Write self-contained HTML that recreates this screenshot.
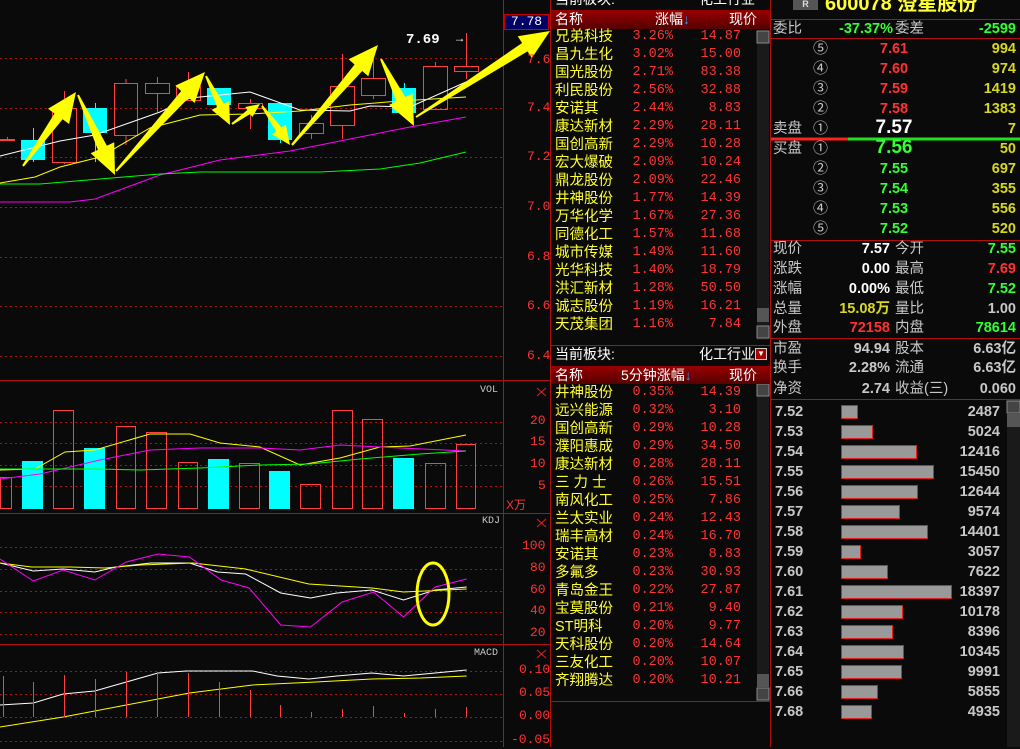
<!DOCTYPE html>
<html><head><meta charset="utf-8">
<style>
*{margin:0;padding:0;box-sizing:border-box}
body{width:1020px;height:747px;background:#0a0a0a;overflow:hidden;position:relative;font-family:"Liberation Sans","Noto Sans CJK SC",sans-serif;}
.a{position:absolute;white-space:nowrap;line-height:18px}
.cn{font-family:"Liberation Sans","Noto Sans CJK SC",sans-serif;font-size:14px}
.m{font-family:"Liberation Mono","Noto Sans CJK SC",monospace;font-size:13px}
.y{color:#ffff33}.r{color:#ff3232}.g{color:#33ff33}.w{color:#fff}.gr{color:#c8c8c8}.yy{color:#d8d820}
.row{position:absolute;left:0;width:206px;height:18px;line-height:18px;font-size:14.5px}
.row .n{position:absolute;left:4px;color:#ffff33}
.row .p{position:absolute;right:84px;color:#ff3232;font-family:"Liberation Mono",monospace;font-size:13.5px}
.row .v{position:absolute;right:16px;color:#ff3232;font-family:"Liberation Mono",monospace;font-size:13.5px}
.rp .a{font-size:14.5px}
.b{font-weight:bold}
</style></head><body>
<svg id="ch" width="1020" height="747" style="position:absolute;left:0;top:0"></svg>

<div class="a m r" style="left:527px;top:51px">7.6</div>
<div class="a m r" style="left:527px;top:99px">7.4</div>
<div class="a m r" style="left:527px;top:148px">7.2</div>
<div class="a m r" style="left:527px;top:198px">7.0</div>
<div class="a m r" style="left:527px;top:248px">6.8</div>
<div class="a m r" style="left:527px;top:297px">6.6</div>
<div class="a m r" style="left:527px;top:347px">6.4</div>
<div class="a m" style="left:504px;top:14px;width:45px;height:16px;line-height:14px;background:#000066;border:1px solid #c00;color:#fff;text-align:center">7.78</div>
<div class="a m w" style="left:406px;top:31px;font-size:14px;font-weight:bold">7.69</div>
<div class="a m w" style="left:456px;top:30px;font-size:12px">→</div>
<div class="a m gr" style="left:480px;top:382px;font-size:10px">VOL</div>
<div class="a m gr" style="left:482px;top:513px;font-size:10px">KDJ</div>
<div class="a m gr" style="left:474px;top:645px;font-size:10px">MACD</div>
<div class="a m r" style="left:530px;top:412px">20</div>
<div class="a m r" style="left:530px;top:433px">15</div>
<div class="a m r" style="left:530px;top:455px">10</div>
<div class="a m r" style="left:538px;top:477px">5</div>
<div class="a cn r" style="left:506px;top:496px;font-size:12px">X万</div>
<div class="a m r" style="left:522px;top:537px">100</div>
<div class="a m r" style="left:530px;top:559px">80</div>
<div class="a m r" style="left:530px;top:581px">60</div>
<div class="a m r" style="left:530px;top:602px">40</div>
<div class="a m r" style="left:530px;top:624px">20</div>
<div class="a m r" style="left:519px;top:661px">0.10</div>
<div class="a m r" style="left:519px;top:684px">0.05</div>
<div class="a m r" style="left:519px;top:707px">0.00</div>
<div class="a m r" style="left:511px;top:731px">-0.05</div>

<div style="position:absolute;left:551px;top:0;width:219px;height:747px">
<div class="a cn w" style="left:4px;top:-10px">当前板块:</div>
<div class="a cn w" style="left:148px;top:-10px">化工行业</div>
<div style="position:absolute;left:0;top:10px;width:219px;height:19px;background:linear-gradient(#900,#500)"></div>
<div class="a cn w" style="left:4px;top:10px">名称</div>
<div class="a cn w" style="left:104px;top:10px">涨幅<span style="color:#39f">↓</span></div>
<div class="a cn w" style="left:178px;top:10px">现价</div>
<div style="position:absolute;left:0;top:28px">
<div class="row" style="top:0"><span class="n">兄弟科技</span><span class="p">3.26%</span><span class="v">14.87</span></div>
<div class="row" style="top:18px"><span class="n">昌九生化</span><span class="p">3.02%</span><span class="v">15.00</span></div>
<div class="row" style="top:36px"><span class="n">国光股份</span><span class="p">2.71%</span><span class="v">83.38</span></div>
<div class="row" style="top:54px"><span class="n">利民股份</span><span class="p">2.56%</span><span class="v">32.88</span></div>
<div class="row" style="top:72px"><span class="n">安诺其</span><span class="p">2.44%</span><span class="v">8.83</span></div>
<div class="row" style="top:90px"><span class="n">康达新材</span><span class="p">2.29%</span><span class="v">28.11</span></div>
<div class="row" style="top:108px"><span class="n">国创高新</span><span class="p">2.29%</span><span class="v">10.28</span></div>
<div class="row" style="top:126px"><span class="n">宏大爆破</span><span class="p">2.09%</span><span class="v">10.24</span></div>
<div class="row" style="top:144px"><span class="n">鼎龙股份</span><span class="p">2.09%</span><span class="v">22.46</span></div>
<div class="row" style="top:162px"><span class="n">井神股份</span><span class="p">1.77%</span><span class="v">14.39</span></div>
<div class="row" style="top:180px"><span class="n">万华化学</span><span class="p">1.67%</span><span class="v">27.36</span></div>
<div class="row" style="top:198px"><span class="n">同德化工</span><span class="p">1.57%</span><span class="v">11.68</span></div>
<div class="row" style="top:216px"><span class="n">城市传媒</span><span class="p">1.49%</span><span class="v">11.60</span></div>
<div class="row" style="top:234px"><span class="n">光华科技</span><span class="p">1.40%</span><span class="v">18.79</span></div>
<div class="row" style="top:252px"><span class="n">洪汇新材</span><span class="p">1.28%</span><span class="v">50.50</span></div>
<div class="row" style="top:270px"><span class="n">诚志股份</span><span class="p">1.19%</span><span class="v">16.21</span></div>
<div class="row" style="top:288px"><span class="n">天茂集团</span><span class="p">1.16%</span><span class="v">7.84</span></div>
</div>
<div class="a cn w" style="left:4px;top:345px">当前板块:</div>
<div class="a cn w" style="left:148px;top:345px">化工行业</div>
<div style="position:absolute;left:204px;top:348px;width:12px;height:12px;background:#a00;border:1px solid #ccc;color:#fff;font-size:8px;line-height:10px;text-align:center">▼</div>
<div style="position:absolute;left:0;top:366px;width:219px;height:18px;background:linear-gradient(#900,#500)"></div>
<div class="a cn w" style="left:4px;top:366px">名称</div>
<div class="a cn w" style="left:70px;top:366px">5分钟涨幅<span style="color:#39f">↓</span></div>
<div class="a cn w" style="left:178px;top:366px">现价</div>
<div style="position:absolute;left:0;top:384px">
<div class="row" style="top:0"><span class="n">井神股份</span><span class="p">0.35%</span><span class="v">14.39</span></div>
<div class="row" style="top:18px"><span class="n">远兴能源</span><span class="p">0.32%</span><span class="v">3.10</span></div>
<div class="row" style="top:36px"><span class="n">国创高新</span><span class="p">0.29%</span><span class="v">10.28</span></div>
<div class="row" style="top:54px"><span class="n">濮阳惠成</span><span class="p">0.29%</span><span class="v">34.50</span></div>
<div class="row" style="top:72px"><span class="n">康达新材</span><span class="p">0.28%</span><span class="v">28.11</span></div>
<div class="row" style="top:90px"><span class="n">三 力 士</span><span class="p">0.26%</span><span class="v">15.51</span></div>
<div class="row" style="top:108px"><span class="n">南风化工</span><span class="p">0.25%</span><span class="v">7.86</span></div>
<div class="row" style="top:126px"><span class="n">兰太实业</span><span class="p">0.24%</span><span class="v">12.43</span></div>
<div class="row" style="top:144px"><span class="n">瑞丰高材</span><span class="p">0.24%</span><span class="v">16.70</span></div>
<div class="row" style="top:162px"><span class="n">安诺其</span><span class="p">0.23%</span><span class="v">8.83</span></div>
<div class="row" style="top:180px"><span class="n">多氟多</span><span class="p">0.23%</span><span class="v">30.93</span></div>
<div class="row" style="top:198px"><span class="n">青岛金王</span><span class="p">0.22%</span><span class="v">27.87</span></div>
<div class="row" style="top:216px"><span class="n">宝莫股份</span><span class="p">0.21%</span><span class="v">9.40</span></div>
<div class="row" style="top:234px"><span class="n">ST明科</span><span class="p">0.20%</span><span class="v">9.77</span></div>
<div class="row" style="top:252px"><span class="n">天科股份</span><span class="p">0.20%</span><span class="v">14.64</span></div>
<div class="row" style="top:270px"><span class="n">三友化工</span><span class="p">0.20%</span><span class="v">10.07</span></div>
<div class="row" style="top:288px"><span class="n">齐翔腾达</span><span class="p">0.20%</span><span class="v">10.21</span></div>
</div>
</div>

<div class="rp" style="position:absolute;left:771px;top:0;width:249px;height:747px">
<div style="position:absolute;left:22px;top:0;width:25px;height:10px;background:#555;color:#ddd;font-size:9px;font-weight:bold;text-align:center;line-height:8px">R</div>
<div class="a y b" style="left:54px;top:-7px;font-size:20px;line-height:22px">600078 澄星股份</div>
<div class="a gr" style="left:2px;top:20px">委比</div>
<div class="a g b" style="left:68px;top:20px">-37.37%</div>
<div class="a gr" style="left:124px;top:20px">委差</div>
<div class="a g b" style="right:4px;top:20px">-2599</div>
<div id="ob"></div>
<div class="a gr" style="left:2px;top:120px">卖盘</div>
<div class="a gr" style="left:2px;top:140px">买盘</div>
<div class="a gr" style="left:2px;top:240px">现价</div><div class="a w b" style="right:130px;top:240px">7.57</div><div class="a gr" style="left:124px;top:240px">今开</div><div class="a g b" style="right:4px;top:240px">7.55</div>
<div class="a gr" style="left:2px;top:260px">涨跌</div><div class="a w b" style="right:130px;top:260px">0.00</div><div class="a gr" style="left:124px;top:260px">最高</div><div class="a r b" style="right:4px;top:260px">7.69</div>
<div class="a gr" style="left:2px;top:280px">涨幅</div><div class="a w b" style="right:130px;top:280px">0.00%</div><div class="a gr" style="left:124px;top:280px">最低</div><div class="a g b" style="right:4px;top:280px">7.52</div>
<div class="a gr" style="left:2px;top:300px">总量</div><div class="a yy b" style="right:130px;top:300px">15.08万</div><div class="a gr" style="left:124px;top:300px">量比</div><div class="a gr b" style="right:4px;top:300px">1.00</div>
<div class="a gr" style="left:2px;top:319px">外盘</div><div class="a r b" style="right:130px;top:319px">72158</div><div class="a gr" style="left:124px;top:319px">内盘</div><div class="a g b" style="right:4px;top:319px">78614</div>
<div class="a gr" style="left:2px;top:340px">市盈</div><div class="a gr b" style="right:130px;top:340px">94.94</div><div class="a gr" style="left:124px;top:340px">股本</div><div class="a gr b" style="right:4px;top:340px">6.63亿</div>
<div class="a gr" style="left:2px;top:359px">换手</div><div class="a gr b" style="right:130px;top:359px">2.28%</div><div class="a gr" style="left:124px;top:359px">流通</div><div class="a gr b" style="right:4px;top:359px">6.63亿</div>
<div class="a gr" style="left:2px;top:380px">净资</div><div class="a gr b" style="right:130px;top:380px">2.74</div><div class="a gr" style="left:124px;top:380px">收益(三)</div><div class="a gr b" style="right:4px;top:380px">0.060</div>
<div id="lad"></div>
</div>

<script>
var S=document.getElementById('ch'),h='';
function L(x1,y1,x2,y2,c,w,d){h+='<line x1="'+x1+'" y1="'+y1+'" x2="'+x2+'" y2="'+y2+'" stroke="'+c+'" stroke-width="'+(w||1)+'"'+(d?' stroke-dasharray="'+d+'"':'')+'/>';}
function R(x,y,w,hh,f,s){h+='<rect x="'+x+'" y="'+y+'" width="'+w+'" height="'+hh+'" fill="'+f+'" stroke="'+(s||'none')+'"/>';}
function P(pts,c,w){h+='<polyline fill="none" stroke="'+c+'" stroke-width="'+(w||1)+'" points="'+pts.map(function(p){return p.join(',')}).join(' ')+'"/>';}
[58,108,157,207,257,306,356,422,443,465,486,547,569,591,612,634,671,694,717,741].forEach(function(y){L(0,y+.5,503,y+.5,'#b01010',1,'2,3');});
L(503.5,0,503.5,747,'#b01010');L(0,380.5,550,380.5,'#b01010');L(0,513.5,550,513.5,'#b01010');L(0,644.5,550,644.5,'#b01010');
L(550.5,0,550.5,747,'#b01010');L(770.5,0,770.5,747,'#b01010');
L(551,345.5,770,345.5,'#b01010');L(551,701.5,770,701.5,'#b01010');
L(771,19.5,1020,19.5,'#b01010');L(771,38.5,1020,38.5,'#b01010');L(771,240.5,1020,240.5,'#b01010');L(771,338.5,1020,338.5,'#b01010');L(771,399.5,1020,399.5,'#b01010');
L(771,139,848,139,'#ff2020',3);L(848,139,1020,139,'#20e020',3);
[388,519,650].forEach(function(y){L(537,y,546,y+8,'#e02020');L(546,y,537,y+8,'#e02020');});
R(757,31,12,309,'#1a1a1a');R(757,31,12,12,'#444','#888');R(757,326,12,12,'#444','#888');R(757,308,12,14,'#555');
R(757,384,12,317,'#1a1a1a');R(757,384,12,12,'#444','#888');R(757,688,12,12,'#444','#888');R(757,674,12,13,'#555');
R(1007,400,13,347,'#1a1a1a');R(1007,401,13,12,'#444','#888');R(1007,414,13,13,'#555');
var C=[[0,14,139,139,137,141,1],[21,45,140,160,128,162,0],[52,76,108,162,91,164,1],[83,107,108,133,103,162,0],[114,137,83,135,79,145,1],[145,169,83,93,77,112,1],[176,200,86,100,72,101,1],[207,231,88,105,88,105,0],[238,262,103,108,99,129,1],[268,292,103,140,103,143,0],[299,323,123,133,115,139,1],[330,354,86,125,54,139,1],[361,385,78,95,59,99,1],[392,416,88,113,83,114,0],[423,447,66,109,62,109,1],[454,478,66,71,33,79,1]];
C.forEach(function(c){var cx=(c[0]+c[1])/2+.5;if(c[6]){L(cx,c[4],cx,c[2],'#ff4040');L(cx,c[3],cx,c[5],'#ff4040');R(c[0]+.5,c[2]+.5,c[1]-c[0],Math.max(c[3]-c[2],1),'none','#ff4040');}else{L(cx,c[4],cx,c[5],'#00ffff');R(c[0],c[2],c[1]-c[0],c[3]-c[2],'#00ffff');}});
P([[0,156],[60,141],[95,135],[160,112],[190,98],[250,92],[300,110],[350,111],[370,106],[410,107],[466,82]],'#fff');
P([[0,183],[35,177],[60,167],[100,157],[150,128],[200,115],[250,114],[300,111],[350,105],[400,101],[466,97]],'#ffff00');
P([[0,202],[70,202],[95,199],[160,175],[220,160],[290,151],[350,139],[410,127],[466,117]],'#ff00ff');
P([[0,184],[40,184],[100,179],[160,174],[200,172],[260,172],[320,172],[380,169],[420,163],[466,152]],'#00ff00');
function A(x1,y1,x2,y2){var dx=x2-x1,dy=y2-y1,l=Math.sqrt(dx*dx+dy*dy),ux=dx/l,uy=dy/l,nx=-uy,ny=ux,hl=Math.min(30,l*.4),hw=Math.min(13,l*.18),sw=Math.min(5,l*.07);
var bx=x2-ux*hl,by=y2-uy*hl;var pts=[[x1+nx*1,y1+ny*1],[bx+nx*sw,by+ny*sw],[bx+nx*hw,by+ny*hw],[x2,y2],[bx-nx*hw,by-ny*hw],[bx-nx*sw,by-ny*sw],[x1-nx*1,y1-ny*1]];
h+='<polygon fill="#ffff00" points="'+pts.map(function(p){return p[0].toFixed(1)+','+p[1].toFixed(1)}).join(' ')+'"/>';}
A(23,166,76,92);A(78,95,115,175);A(116,171,205,72);A(206,76,230,125);A(232,124,260,104);A(262,106,290,145);A(292,145,378,45);A(381,59,414,126);A(416,117,550,31);
var V=[[0,11,477,1],[22,43,461,0],[53,73,410,1],[84,105,448,0],[116,135,426,1],[146,166,432,1],[178,197,462,1],[208,229,459,0],[239,259,463,1],[269,290,471,0],[300,320,484,1],[332,352,410,1],[362,382,419,1],[393,414,458,0],[425,445,463,1],[456,475,444,1]];
V.forEach(function(v){if(v[3])R(v[0]+.5,v[2]+.5,v[1]-v[0],508-v[2],'none','#ff4040');else R(v[0],v[2],v[1]-v[0],509-v[2],'#00ffff');});
P([[0,470],[35,469],[65,452],[95,450],[150,434],[190,434],[220,443],[260,447],[300,465],[340,458],[380,447],[410,446],[466,435]],'#ffff00');
P([[0,479],[40,474],[100,460],[150,450],[200,448],[260,448],[300,450],[340,445],[400,448],[466,451]],'#ff00ff');
P([[0,469],[100,469],[140,470],[200,468],[260,465],[310,464],[360,459],[420,454],[466,451]],'#00ff00');
function sx(a){return a.map(function(p){return [p[0]/2.85,p[1]];});}
P(sx([[0,563],[95,571],[180,569],[270,572],[330,567],[430,563],[540,563],[620,572],[700,574],[800,593],[885,598],[960,593],[1060,590],[1150,600],[1240,590],[1330,587]]),'#fff');
P(sx([[0,563],[90,567],[200,567],[300,568],[400,565],[550,563],[700,569],[880,584],[1060,588],[1150,592],[1330,589]]),'#ffff00');
P(sx([[0,559],[95,581],[180,570],[270,580],[360,562],[450,554],[540,557],[630,580],[710,588],[800,625],[885,627],[975,602],[1065,592],[1150,617],[1240,587],[1330,579]]),'#ff00ff');
h+='<ellipse cx="433" cy="594" rx="16" ry="31" fill="none" stroke="#ffff00" stroke-width="3"/>';
P(sx([[0,705],[95,703],[180,694],[270,691],[360,682],[450,673],[530,671],[720,671],[790,676],[880,679],[960,676],[1060,673],[1150,676],[1240,673],[1330,670]]),'#fff');
P(sx([[0,727],[180,717],[360,705],[540,693],[720,685],[900,682],[1060,679],[1200,678],[1330,676]]),'#ffff00');
[[3,676],[33,682],[64,675],[95,679],[126,672],[157,672],[188,673],[219,682],[250,690],[280,705],[311,712],[342,709],[373,706],[404,713],[435,709],[466,707]].forEach(function(b){L(b[0]+.5,b[1],b[0]+.5,717,'#ff4040');});
var circ=['⑤','④','③','②','①','①','②','③','④','⑤'];
var bp=[['7.61','994'],['7.60','974'],['7.59','1419'],['7.58','1383'],['7.57','7'],['7.56','50'],['7.55','697'],['7.54','355'],['7.53','556'],['7.52','520']];
var o='';bp.forEach(function(b,i){var t=40+i*20;var pc=i<4?'#ff3232':(i==4?'#fff':'#33ff33');var fs=(i==4||i==5)?'19px':'14.5px';
o+='<div class="a gr" style="left:42px;top:'+t+'px;font-size:15px">'+circ[i]+'</div><div class="a b" style="left:93px;width:60px;text-align:center;top:'+(t-(i==4||i==5?1:0))+'px;color:'+pc+';font-size:'+fs+'">'+b[0]+'</div><div class="a b yy" style="right:4px;top:'+t+'px">'+b[1]+'</div>';});
document.getElementById('ob').innerHTML=o;
var ld=[['7.52',2487],['7.53',5024],['7.54',12416],['7.55',15450],['7.56',12644],['7.57',9574],['7.58',14401],['7.59',3057],['7.60',7622],['7.61',18397],['7.62',10178],['7.63',8396],['7.64',10345],['7.65',9991],['7.66',5855],['7.68',4935]];
o='';ld.forEach(function(d,i){var t=403+i*20;o+='<div class="a gr b" style="left:4px;top:'+t+'px">'+d[0]+'</div><div style="position:absolute;left:70px;top:'+(t+2)+'px;height:14px;width:'+Math.round(d[1]*0.00592+2)+'px;background:#999;border:1px solid #e02020"></div><div class="a gr b" style="right:20px;top:'+t+'px">'+d[1]+'</div>';});
document.getElementById('lad').innerHTML=o;
S.innerHTML=h;
</script>
</body></html>
